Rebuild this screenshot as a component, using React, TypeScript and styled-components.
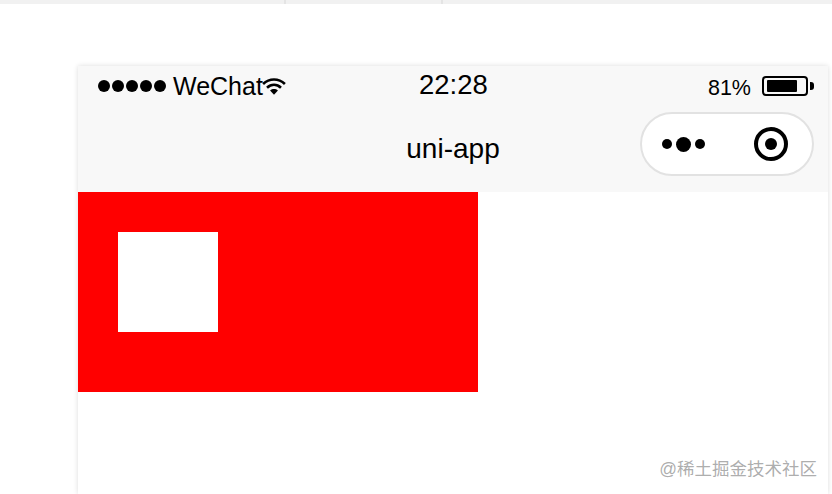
import styled, { createGlobalStyle } from 'styled-components';

const GlobalStyle = createGlobalStyle`
  html, body {
    margin: 0;
    padding: 0;
    height: 100%;
    overflow: hidden;
    background: #fff;
    font-family: 'Liberation Sans', 'Noto Sans CJK SC', sans-serif;
  }
`;

const App = () => {
  return (
    <Page>
      <GlobalStyle />
      <TopStrip>
        <StripTab $width={286} />
        <StripTab $width={157} />
      </TopStrip>
      <Phone>
        <Header>
          <StatusBar>
            <StatusLeft>
              <Signal>
                {[0, 1, 2, 3, 4].map((i) => (
                  <SignalDot key={i} />
                ))}
              </Signal>
              <Carrier>WeChat</Carrier>
              <svg width="24" height="20" viewBox="0 0 22 18">
                <path d="M1 7.2C6.8 1.6 15.2 1.6 21 7.2" fill="none" stroke="#000" strokeWidth="2.4" />
                <path d="M4.6 10.6C8.4 7 13.6 7 17.4 10.6" fill="none" stroke="#000" strokeWidth="2.4" />
                <path d="M7.4 13.2C9.6 11.4 12.4 11.4 14.6 13.2L11 17Z" fill="#000" />
              </svg>
            </StatusLeft>
            <Clock>22:28</Clock>
            <StatusRight>
              <Percent>81%</Percent>
              <Battery>
                <BatteryFill />
              </Battery>
              <BatteryTip />
            </StatusRight>
          </StatusBar>
          <NavBar>
            <NavTitle>uni-app</NavTitle>
            <Capsule>
              <Dots>
                <MoreDot $size={10} />
                <MoreDot $size={15} />
                <MoreDot $size={10} />
              </Dots>
              <svg width="36" height="36" viewBox="0 0 36 36">
                <circle cx="18" cy="18" r="15" fill="none" stroke="#000" strokeWidth="4" />
                <circle cx="18" cy="18" r="6" fill="#000" />
              </svg>
            </Capsule>
          </NavBar>
        </Header>
        <RedBox>
          <WhiteBox />
        </RedBox>
      </Phone>
      <Watermark>@稀土掘金技术社区</Watermark>
    </Page>
  );
};

export default App;

const Page = styled.div`
  position: relative;
  width: 832px;
  height: 494px;
  overflow: hidden;
  background: #fff;
`;

const TopStrip = styled.div`
  display: flex;
  height: 4px;
  background: #f1f1f1;
`;

const StripTab = styled.div<{ $width: number }>`
  box-sizing: border-box;
  width: ${(p) => p.$width}px;
  height: 4px;
  border-right: 2px solid #e4e4e4;
`;

const Phone = styled.div`
  width: 750px;
  height: 428px;
  margin: 62px 0 0 78px;
  background: #fff;
  box-shadow: 0 0 5px rgba(0, 0, 0, 0.14);
`;

const Header = styled.div`
  display: flex;
  flex-direction: column;
  height: 126px;
  background: #f8f8f8;
`;

const StatusBar = styled.div`
  position: relative;
  display: flex;
  justify-content: space-between;
  align-items: center;
  height: 40px;
  color: #000;
`;

const StatusLeft = styled.div`
  display: flex;
  align-items: center;
  padding-left: 20px;
`;

const Signal = styled.div`
  display: flex;
  gap: 2px;
`;

const SignalDot = styled.span`
  width: 12px;
  height: 12px;
  border-radius: 50%;
  background: #000;
`;

const Carrier = styled.span`
  margin: 0 -1px 0 7px;
  font-size: 25px;
  line-height: 40px;
`;

const Clock = styled.span`
  position: absolute;
  left: 341px;
  top: 0;
  font-size: 27.5px;
  line-height: 38px;
`;

const StatusRight = styled.div`
  display: flex;
  align-items: center;
  padding-right: 14px;
`;

const Percent = styled.span`
  margin: 3px 11px 0 0;
  font-size: 21.5px;
  line-height: 36px;
`;

const Battery = styled.div`
  box-sizing: border-box;
  display: flex;
  align-items: center;
  width: 46px;
  height: 20px;
  padding: 2px 3px;
  border: 2px solid #000;
  border-radius: 4px;
`;

const BatteryFill = styled.div`
  width: 30px;
  height: 12px;
  border-radius: 1px;
  background: #000;
`;

const BatteryTip = styled.div`
  width: 4px;
  height: 8px;
  margin-left: 2px;
  border-radius: 0 3px 3px 0;
  background: #000;
`;

const NavBar = styled.div`
  position: relative;
  display: flex;
  justify-content: flex-end;
  align-items: center;
  height: 86px;
  padding-right: 14px;
`;

const NavTitle = styled.span`
  position: absolute;
  left: 0;
  right: 0;
  top: 25px;
  text-align: center;
  font-size: 28px;
  line-height: 36px;
  color: #000;
`;

const Capsule = styled.div`
  box-sizing: border-box;
  display: flex;
  justify-content: space-between;
  align-items: center;
  width: 174px;
  height: 64px;
  margin-top: -10px;
  padding: 0 23px 0 20px;
  border: 2px solid #e2e2e2;
  border-radius: 32px;
  background: #fff;
`;

const Dots = styled.div`
  display: flex;
  align-items: center;
  gap: 4px;
`;

const MoreDot = styled.span<{ $size: number }>`
  width: ${(p) => p.$size}px;
  height: ${(p) => p.$size}px;
  border-radius: 50%;
  background: #000;
`;

const RedBox = styled.div`
  box-sizing: border-box;
  width: 400px;
  height: 200px;
  padding: 40px;
  background: #ff0000;
`;

const WhiteBox = styled.div`
  width: 100px;
  height: 100px;
  background: #fff;
`;

const Watermark = styled.span`
  position: absolute;
  right: 15px;
  top: 459px;
  font-size: 17.5px;
  line-height: 20px;
  color: rgba(120, 120, 120, 0.62);
`;
